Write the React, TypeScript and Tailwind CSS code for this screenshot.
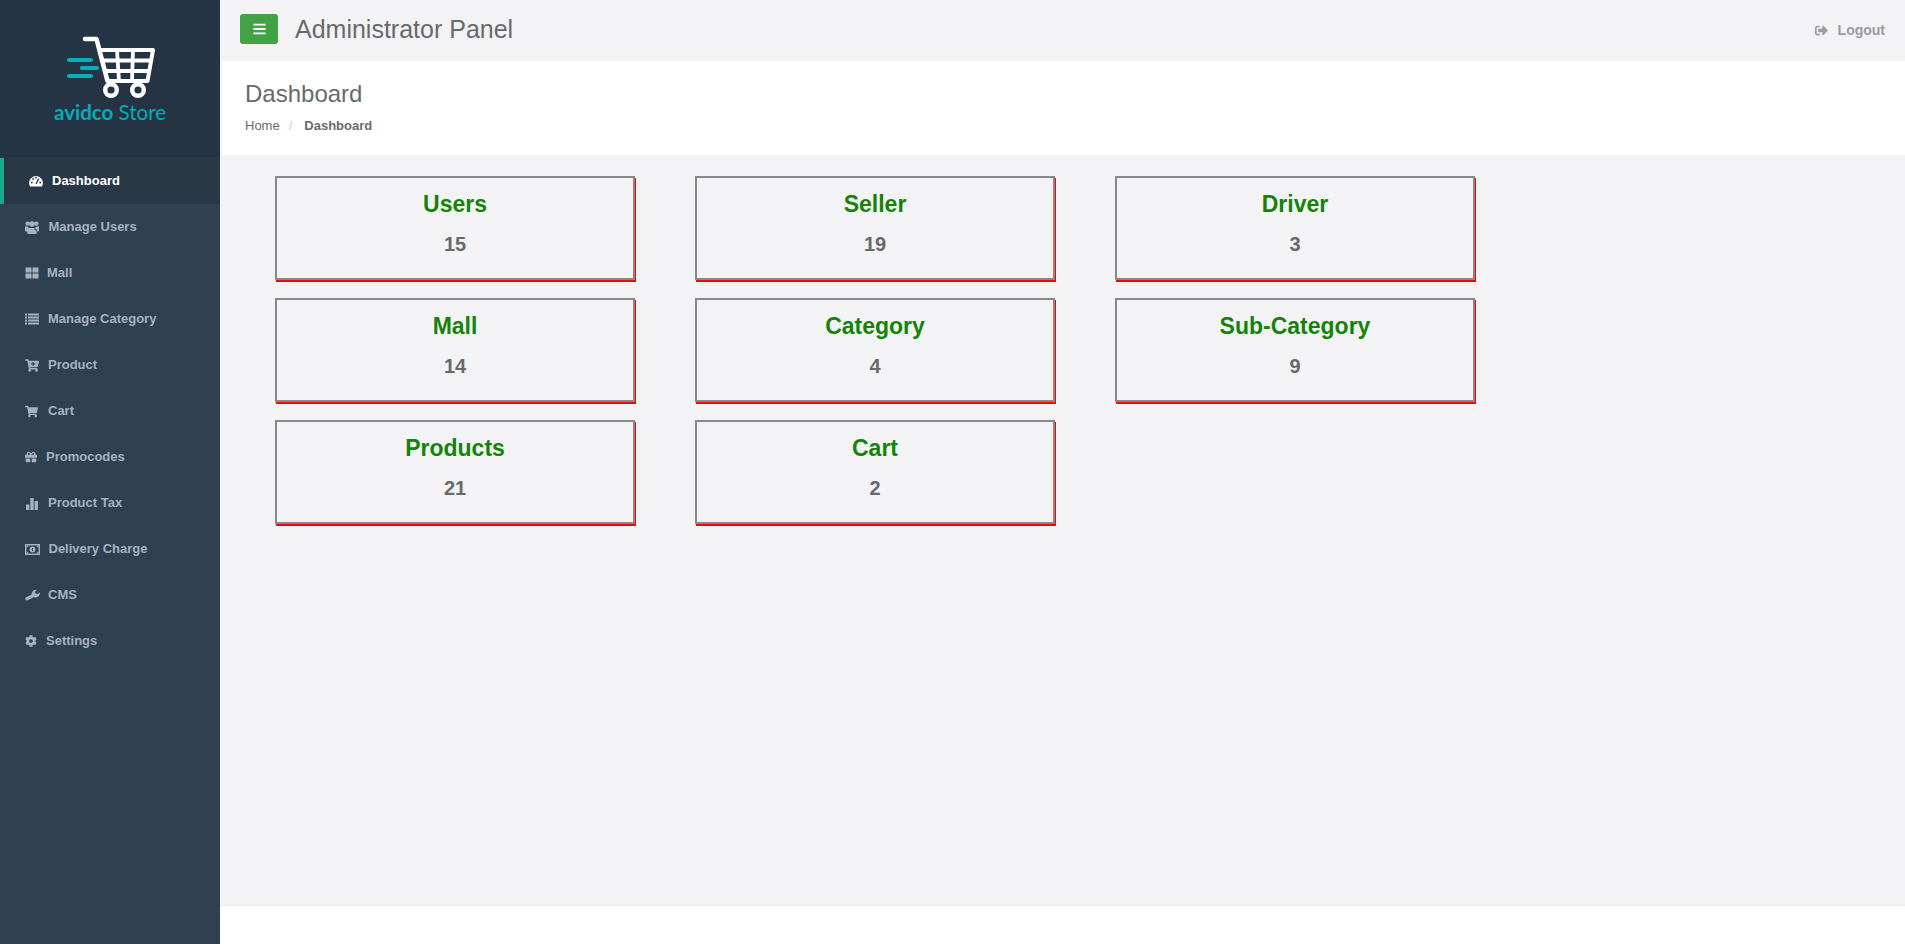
import React from "react";
import { FaBars, FaCartPlus, FaCog, FaGift, FaShoppingCart, FaSignOutAlt } from "react-icons/fa";

const c = "shrink-0";

function Users() {
  return (
    <svg className={c} width="14" height="13" viewBox="0 0 14 13" fill="currentColor">
      <circle cx="2.6" cy="2.600" r="2.200" />
      <circle cx="11.4" cy="2.600" r="2.200" />
      <circle cx="7" cy="3" r="2.800" />
      <path d="M0 5.400h3c.3 1.200 1 2 2 2.600-1.200.5-2 1.400-2.200 2.600H.8C.3 10.600 0 10.200 0 9.600zM14 5.400h-3c-.3 1.200-1 2-2 2.600 1.200.5 2 1.400 2.200 2.600h2c.5 0 .8-.4.8-1zM4.400 7h5.200c1.500.4 2.200 1.600 2.200 3.300v1.500c0 .7-.4 1.200-1 1.200H3.200c-.6 0-1-.5-1-1.200v-1.500c0-1.700.7-2.900 2.200-3.300z" />
    </svg>
  );
}
function Grid2() {
  return (
    <svg className={c} width="14" height="12" viewBox="0 0 14 12" fill="currentColor">
      <rect x="0.5" y="0.500" width="6" height="5" />
      <rect x="7.500" y="0.500" width="6" height="5" />
      <rect x="0.500" y="6.500" width="6" height="5" />
      <rect x="7.500" y="6.500" width="6" height="5" />
    </svg>
  );
}
function ListI() {
  return (
    <svg className={c} width="14" height="12" viewBox="0 0 14 12" fill="currentColor">
      {[0.5, 3.500, 6.500, 9.500].map((y) => (
        <g key={y}>
          <rect x="0" y={y} width="2" height="2" />
          <rect x="3" y={y} width="11" height="2" />
        </g>
      ))}
    </svg>
  );
}
function Bars3() {
  return (
    <svg className={c} width="14" height="13" viewBox="0 0 14 13" fill="currentColor">
      <rect x="1" y="7.500" width="3.400" height="5.500" />
      <rect x="5.300" y="1" width="3.400" height="12" />
      <rect x="9.600" y="4" width="3.400" height="9" />
    </svg>
  );
}
function Money() {
  return (
    <svg className={c} width="15" height="11" viewBox="0 0 15 11">
      <rect x="0.700" y="0.700" width="13.600" height="9.600" fill="none" stroke="currentColor" strokeWidth="1.400" />
      <path d="M1.500 1.500h2.500l-2.500 2.500zM13.500 1.500h-2.500l2.500 2.500zM1.500 9.500h2.500l-2.500-2.500zM13.500 9.500h-2.500l2.500-2.500z" fill="currentColor" />
      <circle cx="7.500" cy="5.500" r="2.900" fill="currentColor" />
      <rect x="7" y="4" width="1" height="3" fill="#2f4050" />
    </svg>
  );
}
function Wrench() {
  return (
    <svg className={c} width="15" height="12" viewBox="0 0 15 12" fill="currentColor">
      <path d="M2 9.800L8.500 6.500" stroke="currentColor" strokeWidth="3.400" strokeLinecap="round" />
      <path d="M6.800 6.400a4.200 4.200 0 0 1 5-5.400l-2 1.900 1 1.800 2.500.1 1.400-1.600a4.200 4.200 0 0 1-5.600 5z" />
    </svg>
  );
}
function Gauge() {
  return (
    <svg className={c} width="14" height="12" viewBox="0 0 14 12">
      <path d="M1.100 11.500A6.900 6.900 0 1 1 12.900 11.500z" fill="currentColor" />
      <g fill="#293846">
        <circle cx="2.800" cy="7.500" r="0.900" />
        <circle cx="4.100" cy="4" r="0.900" />
        <circle cx="7" cy="2.700" r="0.900" />
        <circle cx="11.200" cy="7.500" r="0.900" />
      </g>
      <path d="M7 9L9.800 3.600" stroke="#293846" strokeWidth="1.300" />
    </svg>
  );
}
const cart = () => <FaCartPlus className="h-[13px] w-[14px] shrink-0" />;
const shop = () => <FaShoppingCart className="h-[13px] w-[13px] shrink-0" />;
const gift = () => <FaGift className="h-[12px] w-[12px] shrink-0" />;
const cog = () => <FaCog className="h-[12px] w-[12px] shrink-0" />;

const nav = [
  { label: "Manage Users", Icon: Users, gap: "gap-[9.500px]" },
  { label: "Mall", Icon: Grid2, gap: "gap-[8px]" },
  { label: "Manage Category", Icon: ListI, gap: "gap-[9px]" },
  { label: "Product", Icon: cart, gap: "gap-[9px]" },
  { label: "Cart", Icon: shop, gap: "gap-[10px]" },
  { label: "Promocodes", Icon: gift, gap: "gap-[9px]" },
  { label: "Product Tax", Icon: Bars3, gap: "gap-[9px]" },
  { label: "Delivery Charge", Icon: Money, gap: "gap-[8.500px]" },
  { label: "CMS", Icon: Wrench, gap: "gap-[8px]" },
  { label: "Settings", Icon: cog, gap: "gap-[9px]" },
];

const cards = [
  ["Users", "15"], ["Seller", "19"], ["Driver", "3"],
  ["Mall", "14"], ["Category", "4"], ["Sub-Category", "9"],
  ["Products", "21"], ["Cart", "2"],
];

function Logo() {
  return (
    <div className="flex flex-col items-center">
      <svg width="90" height="65" viewBox="65 33 90 65" fill="none">
        <path d="M85 38h11.500l11 42" stroke="#fff" strokeWidth="4.600" strokeLinecap="round" strokeLinejoin="round" />
        <path d="M100 49h53l-5.500 31H107" stroke="#fff" strokeWidth="4" strokeLinejoin="round" />
        <path d="M103 59.500h48M105 70h44M117 49l2 31M133 49l-1 31" stroke="#fff" strokeWidth="3.800" />
        <circle cx="111" cy="89" r="5.800" stroke="#fff" strokeWidth="4.400" />
        <circle cx="138" cy="89" r="5.800" stroke="#fff" strokeWidth="4.400" />
        <path d="M69 59h22M82 67h15M69 75h22" stroke="#00b1b8" strokeWidth="4.200" strokeLinecap="round" />
      </svg>
      <div className="whitespace-nowrap text-[20.500px] font-normal leading-[26px] text-[#07aab5] font-['Lato',sans-serif]">
        <span className="font-bold">avidco</span> Store
      </div>
    </div>
  );
}

export default function App() {
  return (
    <div className="flex h-screen overflow-hidden bg-[#f3f3f5] font-['Liberation_Sans',Arial,sans-serif] text-[#676a6c]">
      <aside className="w-[220px] shrink-0 bg-[#2f4050] text-[13px] font-bold text-[#a7b1c2]">
        <div className="flex h-[157px] items-start justify-center bg-[#243444] pt-[34px]">
          <Logo />
        </div>
        <div className="h-px bg-[#293a4a]" />
        <div className="flex h-[46px] items-center gap-[9px] border-l-4 border-[#19aa8d] bg-[#293846] pl-[25px] text-white">
          <Gauge />
          <span>Dashboard</span>
        </div>
        {nav.map(({ label, Icon, gap }) => (
          <div key={label} className={`flex h-[46px] items-center pl-[25px] ${gap}`}>
            <Icon />
            <span>{label}</span>
          </div>
        ))}
      </aside>
      <main className="flex min-w-0 flex-1 flex-col">
        <header className="flex h-[61px] shrink-0 items-center pb-[3px] pl-[20px] pr-[20px]">
          <button className="flex h-[30px] w-[38px] items-center justify-center rounded-[3px] bg-[#41a345] text-white">
            <FaBars className="h-[14px] w-[13px]" />
          </button>
          <h1 className="ml-[17px] pt-[2px] text-[25px] font-normal">Administrator Panel</h1>
          <div className="ml-auto flex items-center gap-[10px] pt-[2px] text-[14px] font-bold text-[#999c9e]">
            <FaSignOutAlt className="h-[13px] w-[13px]" />
            <span>Logout</span>
          </div>
        </header>
        <section className="ml-[2px] flex h-[94px] shrink-0 flex-col bg-white pl-[23px] pt-[20px]">
          <h2 className="text-[24px] font-normal leading-[26px]">Dashboard</h2>
          <div className="mt-[10px] flex text-[13px] leading-[18px]">
            <span>Home</span>
            <span className="mx-[9px] text-[#ccc]">/</span>
            <strong className="ml-[3px]">Dashboard</strong>
          </div>
        </section>
        <section className="flex-1 pl-[55px] pt-[21px]">
          <div className="grid grid-cols-[360px_360px_360px] gap-x-[60px] gap-y-[18px]">
            {cards.map(([title, value]) => (
              <div key={title} className="h-[104px] border-2 border-[#888] text-center shadow-[1px_2px_0_#f00]">
                <h3 className="mt-[11px] text-[23px] font-bold leading-[30px] text-[#158308]">{title}</h3>
                <p className="mt-[12px] text-[20px] font-bold leading-[26px]">{value}</p>
              </div>
            ))}
          </div>
        </section>
        <footer className="h-[39px] shrink-0 border-t border-[#e7eaec] bg-white" />
      </main>
    </div>
  );
}
